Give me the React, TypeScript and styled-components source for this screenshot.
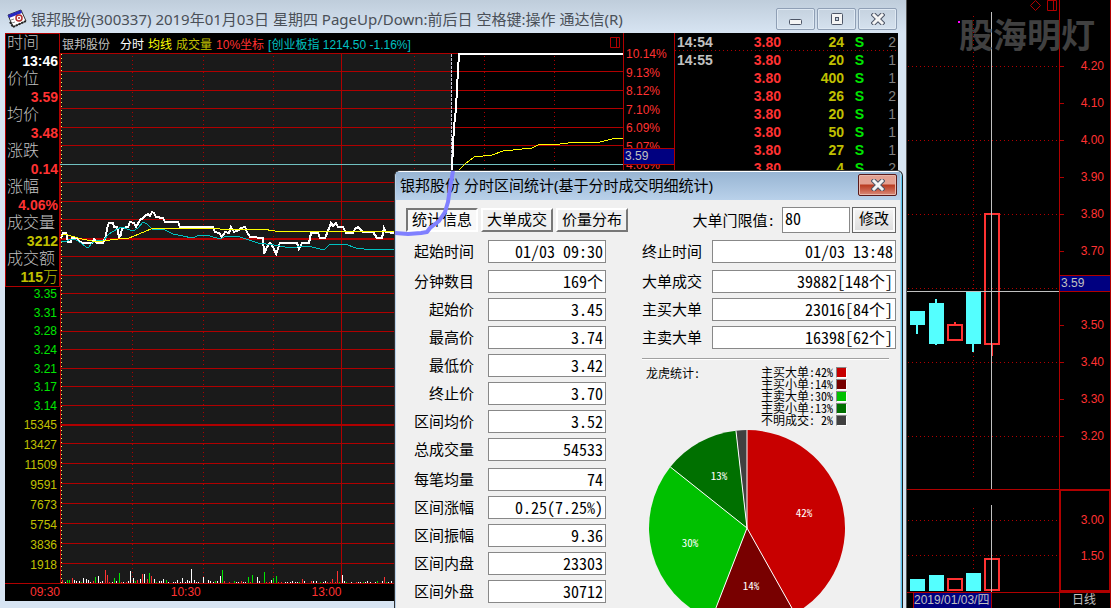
import React from 'react';
import styled, { createGlobalStyle } from 'styled-components';

const SANS = '"Liberation Sans", "Noto Sans CJK SC", sans-serif';
const TITLE = '"Noto Sans", "Noto Sans CJK SC", sans-serif';
const MONO = '"Noto Sans Mono CJK SC", "Liberation Mono", "Noto Sans CJK SC", monospace';

const RED = '#b00000';
const BRIGHT = '#ff3232';
const YELLOW = '#c0c000';
const SILVER = '#c0c0c0';
const AQUA = '#54ffff';

const GlobalStyle = createGlobalStyle`
  *, *::before, *::after { box-sizing: border-box; }
  body { margin: 0; background: #000; font-family: ${SANS}; }
  button, input { font: inherit; margin: 0; }
`;

const Desktop = styled.main`
  display: grid;
  grid-template-columns: minmax(0, 907fr) minmax(0, 204fr);
  min-height: 100vh;
  background: #000;
  overflow: hidden;
`;

/* ---------- intraday window ---------- */

const Window = styled.section`
  position: relative;
  display: flex;
  flex-direction: column;
  padding: 0 8px 7px 5px;
  border-right: 1px solid #555;
  background: #d7e4f2;
  overflow: hidden;
`;

const TitleBar = styled.header`
  display: flex;
  align-items: center;
  gap: 4px;
  height: 33px;
  margin: 0 -8px 0 -5px;
  padding: 5px 9px 0 7px;
  background: linear-gradient(#bfcddb, #d7e4f2);
`;

const WindowTitle = styled.h1`
  flex: 1;
  margin: 0;
  font: 400 15px/24px ${TITLE};
  color: #4a5058;
  white-space: nowrap;
`;

const Caption = styled.div`
  display: flex;
  gap: 2px;
`;

const CaptionButton = styled.button`
  display: flex;
  align-items: center;
  justify-content: center;
  width: 39px;
  height: 22px;
  padding: 0;
  border: 1px solid #8f9fb5;
  border-radius: 2px;
  background: linear-gradient(#c5d2df, #d5e1ee);
  box-shadow: inset 0 0 0 1px #dfe9f3;
`;

const Board = styled.div`
  display: grid;
  grid-template-columns: 55px minmax(0, 1fr) 52px 223px;
  grid-template-rows: auto 17px;
  background: #000;
`;

const Side = styled.aside`
  display: flex;
  flex-direction: column;
  border-bottom: 1px solid ${RED};
`;

const Quote = styled.dl`
  margin: 0;
  padding: 0 1px;
  border: 1px solid ${RED};
  line-height: 18px;
`;

const QuoteName = styled.dt`
  font-size: 16px;
  color: ${SILVER};
  font-weight: 300;
  white-space: nowrap;
`;

const QuoteValue = styled.dd<{ $color: string }>`
  height: 18px;
  margin: 0;
  font-size: 14px;
  font-weight: 700;
  text-align: right;
  white-space: nowrap;
  color: ${(p) => p.$color};
`;

const Unit = styled.span`
  font-size: 15px;
  font-weight: 300;
`;

const Scale = styled.div<{ $color: string; $height: number }>`
  display: flex;
  flex-direction: column;
  justify-content: space-between;
  align-items: flex-end;
  height: ${(p) => p.$height}px;
  padding-right: 3px;
  font: 12px/14px ${SANS};
  color: ${(p) => p.$color};
`;

const VolumeScale = styled(Scale)`
  margin-top: 5px;
`;

const ChartColumn = styled.div`
  display: flex;
  flex-direction: column;
  min-width: 0;
`;

const ChartHeader = styled.div`
  display: flex;
  align-items: center;
  gap: 4px;
  height: 20px;
  padding: 0 2px;
  font-size: 12px;
  white-space: nowrap;
`;

const Legend = styled.span<{ $color: string }>`
  color: ${(p) => p.$color};
`;

const StockName = styled(Legend)`
  margin-right: 6px;
`;

const HeaderIcon = styled.svg`
  margin-left: auto;
`;

const Plot = styled.svg<{ $height: number }>`
  display: block;
  width: 100%;
  height: ${(p) => p.$height}px;
`;

const PercentAxis = styled.div`
  position: relative;
  padding: 14px 0 0 2px;
  border: 1px solid ${RED};
  border-width: 0 1px;
`;

const PercentScale = styled(Scale)`
  align-items: flex-start;
  padding: 0;
`;

const CursorPrice = styled.output<{ $top: number }>`
  position: absolute;
  left: 0;
  right: 0;
  top: ${(p) => p.$top}px;
  height: 17px;
  padding-left: 1px;
  border: 1px solid ${RED};
  border-width: 1px 0;
  background: #000080;
  color: ${SILVER};
  font: 12px/15px ${SANS};
`;

const TimeAxis = styled.div`
  display: flex;
  color: ${BRIGHT};
  font: 12px/16px ${SANS};
`;

const TimeCell = styled.span`
  flex: 0 0 25%;
  text-align: right;
`;

const OpenTime = styled(TimeCell)`
  flex-basis: 100%;
`;

const Ticks = styled.table`
  align-self: start;
  width: 100%;
  border-collapse: collapse;
  font: 700 14px/18px ${SANS};
  td {
    padding: 0 2px;
    text-align: right;
  }
`;

const TickRow = styled.tr<{ $ruled: boolean }>`
  height: 18px;
  background: ${(p) =>
    p.$ruled ? `repeating-linear-gradient(90deg, ${RED} 0 1px, transparent 1px 4px) bottom / 100% 1px no-repeat` : 'none'};
`;

const TickCell = styled.td<{ $color: string; $width: number; $weight?: number }>`
  width: ${(p) => p.$width}px;
  color: ${(p) => p.$color};
  font-weight: ${(p) => p.$weight ?? 700};
`;

const TickTime = styled(TickCell)`
  && { text-align: left; }
`;

/* ---------- statistics dialog ---------- */

const Dialog = styled.section`
  position: absolute;
  top: 170px;
  left: 394px;
  width: 509px;
  height: 480px;
  border: 1px solid #333;
  border-right-color: #1c1c1c;
  border-radius: 6px 6px 0 0;
  background: #b9d1ea;
  padding: 0 2px 0 1px;
  box-shadow: inset 0 1px #fff, inset -1px 0 #58c8f0;
`;

const DialogTitle = styled.header`
  display: flex;
  align-items: center;
  justify-content: space-between;
  height: 28px;
  margin: 1px 0 0;
  padding: 0 3px 2px 4px;
  background: linear-gradient(#98b5d3, #b9d1ea);
  h2 {
    margin: 0;
    font: 400 15px/24px ${TITLE};
    color: #000;
    white-space: nowrap;
  }
`;

const CloseButton = styled.button`
  display: flex;
  align-items: center;
  justify-content: center;
  width: 39px;
  height: 22px;
  padding: 0;
  border: 1px solid #5a1a1a;
  border-radius: 2px;
  background: linear-gradient(#e3a091 0 45%, #b83a20 50%, #c9604a 75%, #d98c7c);
  box-shadow: inset 0 0 0 1px #e8b8ac;
`;

const DialogBody = styled.div`
  height: 450px;
  background: #f0f0f0;
  color: #000;
  font: 15px/20px ${MONO};
`;

const Toolbar = styled.div`
  display: flex;
  align-items: center;
  height: 40px;
  padding: 0 4px 0 10px;
`;

const Tabs = styled.div`
  display: flex;
  gap: 3px;
  flex: 1;
`;

const Tab = styled.button<{ $active?: boolean }>`
  width: 72px;
  height: 24px;
  padding: 0 0 2px;
  line-height: 18px;
  white-space: nowrap;
  color: #000;
  border: 2px solid;
  border-color: ${(p) => (p.$active ? '#777 #fff #fff #777' : '#fff #777 #777 #fff')};
  background: ${(p) => (p.$active ? '#f8f8f8' : '#f0f0f0')};
`;

const Threshold = styled.label`
  display: flex;
  align-items: center;
  gap: 7px;
  white-space: nowrap;
`;

const ThresholdInput = styled.input`
  width: 68px;
  height: 26px;
  padding: 0 2px 4px;
  border: 1px solid #888;
  background: #fff;
  font: 16px/20px ${MONO};
`;

const ApplyButton = styled.button`
  width: 44px;
  height: 26px;
  margin-left: 2px;
  padding: 0 0 4px;
  line-height: 20px;
  border: 1px solid #666;
  box-shadow: inset 0 0 0 2px #fafafa;
  background: linear-gradient(#f4f4f4, #dcdcdc);
  color: #000;
`;

const Columns = styled.div`
  display: grid;
  grid-template-columns: 200px 254px;
  column-gap: 36px;
  padding-left: 10px;
`;

const FieldGroups = styled.div`
  display: flex;
  flex-direction: column;
  gap: 7px;
`;

const FieldGroup = styled.div`
  display: flex;
  flex-direction: column;
  gap: 5px;
`;

const Field = styled.label<{ $gap: number }>`
  display: flex;
  justify-content: flex-end;
  gap: ${(p) => p.$gap}px;
  height: 23px;
  line-height: 21px;
  white-space: nowrap;
`;

const FieldValue = styled.input<{ $width: number }>`
  width: ${(p) => p.$width}px;
  height: 23px;
  padding: 0 2px 2px;
  border: 1px solid #888;
  background: #fff;
  color: #000;
  text-align: right;
  font: 16px/19px ${MONO};
`;

const Separator = styled.hr`
  width: 247px;
  height: 2px;
  margin: 9px 0 0;
  border: 0;
  border-top: 1px solid #a0a0a0;
  border-bottom: 1px solid #fff;
`;

const PieHead = styled.div`
  display: flex;
  justify-content: space-between;
  padding: 6px 49px 0 4px;
  font: 12px/14px ${MONO};
`;

const PieLegend = styled.ul`
  margin: 0;
  padding: 0;
  list-style: none;
  line-height: 12px;
`;

const PieLegendItem = styled.li`
  display: flex;
  align-items: center;
  justify-content: space-between;
  gap: 3px;
  height: 12px;
  white-space: pre;
`;

const Swatch = styled.i<{ $color: string }>`
  width: 11px;
  height: 11px;
  border: 1px solid;
  border-color: #888 #fff #fff #888;
  background: ${(p) => p.$color};
`;

const Pie = styled.svg`
  display: block;
  margin: 4px 0 0 7px;
  overflow: visible;
`;

const Stroke = styled.svg`
  position: absolute;
  top: -1px;
  left: -1px;
  pointer-events: none;
`;

/* ---------- daily panel ---------- */

const Daily = styled.section`
  position: relative;
  display: grid;
  grid-template-columns: minmax(0, 1fr) 52px;
  grid-template-rows: 489px 103px 16px;
  background: #000;
`;

const DailyAxis = styled.div`
  position: relative;
  padding: 48px 6px 0 0;
  border: 1px solid ${RED};
  border-width: 0 1px;
  background: repeating-linear-gradient(${RED} 0 1px, transparent 1px 37px) 0 66px / 4px 371px no-repeat;
`;

const DailyLabel = styled.div<{ $height: number }>`
  height: ${(p) => p.$height}px;
  font: 12px/${(p) => p.$height}px ${SANS};
  text-align: right;
  color: ${BRIGHT};
`;

const VolumeAxis = styled.div`
  padding: 11px 5px 0 0;
  border: 2px solid ${RED};
`;

const DateBar = styled.div`
  padding-left: 6px;
  border-top: 1px solid ${RED};
  color: ${SILVER};
  font: 12px/15px ${SANS};
  white-space: nowrap;
`;

const DateMark = styled.time`
  display: block;
  width: 79px;
  height: 15px;
  border: 1px solid ${RED};
  border-width: 0 1px;
  background: #000080;
`;

const Period = styled.div`
  padding-left: 12px;
  border: 1px solid ${RED};
  border-bottom: 0;
  color: ${SILVER};
  font-size: 12px;
  line-height: 15px;
`;

const Watermark = styled.div`
  position: absolute;
  top: 11px;
  right: 16px;
  font: 700 34px/46px "Noto Sans CJK SC", sans-serif;
  color: #404040;
  white-space: nowrap;
`;

/* ---------- data ---------- */

const quotes: [string, string, string, string?][] = [
  ['时间', '13:46', '#ffffff'],
  ['价位', '3.59', BRIGHT],
  ['均价', '3.48', BRIGHT],
  ['涨跌', '0.14', BRIGHT],
  ['涨幅', '4.06%', BRIGHT],
  ['成交量', '3212', YELLOW],
  ['成交额', '115', YELLOW, '万'],
];

const lowPrices = ['3.35', '3.31', '3.28', '3.24', '3.21', '3.17', '3.14'];
const volumes = ['15345', '13427', '11509', '9591', '7673', '5754', '3836', '1918'];
const percents = ['10.14%', '9.13%', '8.12%', '7.10%', '6.09%', '5.07%', '4.06%'];

const ticks: [string, string, string][] = [
  ['14:54', '24', '2'],
  ['14:55', '20', '1'],
  ['', '400', '1'],
  ['', '26', '2'],
  ['', '20', '1'],
  ['', '50', '1'],
  ['', '27', '1'],
  ['', '4', '2'],
];

const gridRows = [53, 71, 90, 108, 127, 145, 182, 201, 219, 256, 275, 293, 312, 331, 349, 368, 386, 405, 443, 463, 483, 503, 523, 543, 563, 583];
const gridCols = [132, 203, 273, 414, 484, 554];

const priceLine =
  '61,238 63,233 66,233 68,242 71,242 72,238 77,238 79,241 82,243 92,243 94,239 97,243 103,243 106,236 107,228 109,223 113,223 114,227 117,227 119,237 121,235 122,228 128,227 130,222 134,223 136,227 140,220 143,218 145,216 148,214 150,216 152,212 154,213 156,217 163,218 165,222 178,222 180,227 213,227 215,232 219,233 222,237 225,232 229,233 231,227 234,232 239,230 241,228 245,227 247,232 250,237 263,238 264,254 267,247 270,243 273,247 276,254 280,243 297,243 299,249 302,243 309,243 311,233 318,233 320,238 325,238 328,231 331,223 333,226 336,223 338,227 343,227 346,233 353,233 355,229 358,227 363,232 373,232 377,238 382,238 384,228 386,232 394,233';
const surge = '451,233 452,170 453,145 454,127 456,108 457,88 458,71 459,54 623,54';
const averageLine =
  '61,236 65,234 71,236 82,239 92,241 103,241 118,239 129,238 139,234 151,229 165,228 213,228 220,229 262,229 275,231 394,231';
const averageTail = '459,170 465,164 474,157 492,155 503,151 532,148 538,145 560,144 577,142 600,142 612,139 623,138';
const indexLine =
  '61,241 66,242 70,239 76,240 81,243 86,247 88,248 92,243 98,240 103,241 109,234 117,229 122,227 127,229 133,231 138,228 143,222 147,224 152,229 165,230 173,234 183,236 192,238 200,235 210,236 220,239 226,236 240,237 252,241 258,243 274,245 280,246 290,248 304,246 312,247 324,250 329,245 345,244 356,248 372,250 382,249 394,250';

/* x position, height and colour key: w white, r red, g green */
const bars: [number, number, string][] = [
  [62, 3, 'r'], [65, 1, 'w'], [67, 3, 'g'], [69, 3, 'g'], [72, 5, 'r'], [74, 3, 'w'], [76, 2, 'w'], [79, 2, 'w'], [81, 1, 'g'],
  [83, 5, 'w'], [86, 4, 'w'], [88, 3, 'w'], [90, 1, 'w'], [93, 2, 'r'], [95, 6, 'g'], [98, 7, 'w'], [100, 1, 'w'], [102, 2, 'w'],
  [105, 13, 'r'], [107, 8, 'r'], [109, 1, 'r'], [112, 1, 'w'], [114, 5, 'g'], [116, 2, 'w'], [119, 10, 'g'], [121, 1, 'r'], [123, 1, 'w'],
  [126, 1, 'r'], [128, 2, 'w'], [130, 12, 'w'], [133, 5, 'w'], [135, 2, 'g'], [137, 3, 'r'], [140, 4, 'w'], [142, 9, 'r'], [144, 9, 'w'],
  [147, 4, 'r'], [149, 10, 'g'], [151, 7, 'r'], [154, 4, 'w'], [156, 1, 'g'], [159, 2, 'w'], [161, 2, 'w'], [163, 4, 'w'], [166, 3, 'g'],
  [168, 1, 'w'], [173, 1, 'w'], [175, 1, 'w'], [177, 3, 'w'], [180, 1, 'w'], [182, 5, 'w'], [185, 1, 'w'], [187, 3, 'w'], [189, 2, 'w'],
  [191, 14, 'w'], [194, 3, 'w'], [196, 1, 'w'], [198, 1, 'w'], [203, 6, 'w'], [208, 3, 'w'], [210, 2, 'w'], [213, 1, 'w'], [215, 2, 'g'],
  [217, 2, 'w'], [220, 7, 'w'], [222, 13, 'g'], [224, 2, 'r'], [229, 1, 'r'], [234, 2, 'g'], [236, 1, 'w'], [238, 1, 'w'], [241, 2, 'r'],
  [243, 1, 'w'], [245, 1, 'w'], [248, 6, 'g'], [250, 1, 'r'], [252, 8, 'g'], [257, 6, 'w'], [259, 2, 'w'], [264, 11, 'g'], [266, 1, 'r'],
  [269, 1, 'r'], [271, 3, 'w'], [273, 5, 'g'], [276, 7, 'g'], [278, 1, 'r'], [281, 1, 'r'], [285, 1, 'w'], [287, 1, 'w'], [290, 1, 'w'],
  [292, 2, 'w'], [295, 1, 'w'], [297, 1, 'w'], [299, 1, 'g'], [302, 4, 'r'], [304, 2, 'w'], [311, 2, 'r'], [313, 2, 'w'], [316, 2, 'w'],
  [320, 1, 'g'], [323, 1, 'w'], [325, 2, 'w'], [327, 1, 'r'], [330, 1, 'r'], [332, 4, 'r'], [335, 1, 'r'], [337, 12, 'r'], [339, 1, 'g'],
  [342, 8, 'w'], [344, 2, 'w'], [346, 1, 'g'], [351, 1, 'w'], [356, 1, 'r'], [358, 1, 'w'], [360, 1, 'w'], [363, 1, 'g'], [365, 1, 'w'],
  [367, 2, 'w'], [370, 1, 'w'], [375, 1, 'w'], [377, 2, 'g'], [382, 2, 'w'], [384, 6, 'r'], [386, 1, 'g'], [388, 1, 'w'], [391, 2, 'w'],
];
const barColors: Record<string, string> = { w: '#ffffff', r: BRIGHT, g: '#00e600' };

const leftFields: [string, string][][] = [
  [['起始时间', '01/03 09:30']],
  [
    ['分钟数目', '169个'],
    ['起始价', '3.45'],
    ['最高价', '3.74'],
    ['最低价', '3.42'],
    ['终止价', '3.70'],
    ['区间均价', '3.52'],
    ['总成交量', '54533'],
  ],
  [
    ['每笔均量', '74'],
    ['区间涨幅', '0.25(7.25%)'],
    ['区间振幅', '9.36'],
    ['区间内盘', '23303'],
    ['区间外盘', '30712'],
  ],
];

const rightFields: [string, string][][] = [
  [['终止时间', '01/03 13:48']],
  [
    ['大单成交', '39882[148个]'],
    ['主买大单', '23016[84个]'],
    ['主卖大单', '16398[62个]'],
  ],
];

const slices = [
  { name: '主买大单', share: '42%', color: '#c80000', from: 0, to: 0.4186, x: 155, y: 87 },
  { name: '主买小单', share: '14%', color: '#780000', from: 0.4186, to: 0.559, x: 102, y: 160 },
  { name: '主卖大单', share: '30%', color: '#00c000', from: 0.559, to: 0.857, x: 41, y: 117 },
  { name: '主卖小单', share: '13%', color: '#007000', from: 0.857, to: 0.982, x: 70, y: 50 },
  { name: '不明成交', share: ' 2%', color: '#404040', from: 0.982, to: 1, x: 0, y: 0 },
];

const wedge = (from: number, to: number) => {
  const at = (t: number) => `${98 + 98 * Math.sin(t * 2 * Math.PI)} ${98 - 98 * Math.cos(t * 2 * Math.PI)}`;
  return `M98 98L${at(from)}A98 98 0 0 1 ${at(to)}Z`;
};

const dailyPrices = ['4.20', '4.10', '4.00', '3.90', '3.80', '3.70', '3.60', '3.50', '3.40', '3.30', '3.20'];

/* ---------- parts ---------- */

const Cross = () => (
  <svg width="14" height="12" viewBox="0 0 14 12" aria-hidden="true">
    <path d="M3 2l8 8M11 2l-8 8" stroke="#4d5566" strokeWidth="5" strokeLinecap="square" />
    <path d="M3 2l8 8M11 2l-8 8" stroke="#f4f4f4" strokeWidth="3" strokeLinecap="square" />
  </svg>
);

const IntradayPlot = () => (
  <Plot $height={531} viewBox="60 53 563 531" preserveAspectRatio="none" shapeRendering="crispEdges" role="img" aria-label="分时图">
    <rect x="60" y="53" width="391" height="531" fill="#1a1a1a" />
    <g fill={RED}>
      {gridRows.map((y) => (
        <rect key={y} x="60" y={y} width="563" height="1" />
      ))}
      <rect x="60" y="238" width="563" height="2" />
      <rect x="60" y="424" width="563" height="2" />
      <rect x="60" y="53" width="1" height="531" />
      <rect x="341" y="53" width="1" height="531" />
    </g>
    {gridCols.map((x) => (
      <path key={x} d={`M${x + 0.5} 56V583`} stroke={RED} strokeDasharray="1 3" />
    ))}
    <path d="M61.5 54V583" stroke="#ffff60" strokeDasharray="1 3" />
    <rect x="60" y="164" width="563" height="1" fill="#70c0c0" />
    <path d="M451.5 54V583" stroke="#c8c8d8" strokeDasharray="3 1" />
    {bars.map(([x, h, c]) => (
      <rect key={x} x={x} y={583 - h} width="1" height={h} fill={barColors[c]} />
    ))}
    <g fill="none">
      <polyline points={priceLine} stroke="#fff" strokeWidth="2" />
      <polyline points={indexLine} stroke="#00c0c0" />
      <polyline points={averageLine} stroke="#ffff00" />
      <polyline points={averageTail} stroke="#ffff00" />
      <polyline points={surge} stroke="#fff" strokeWidth="2" />
    </g>
  </Plot>
);

const Fields = ({ groups, gap, width }: { groups: [string, string][][]; gap: number; width: number }) => (
  <FieldGroups>
    {groups.map((group) => (
      <FieldGroup key={group[0][0]}>
        {group.map(([name, value]) => (
          <Field key={name} $gap={gap}>
            {name}
            <FieldValue $width={width} readOnly value={value} />
          </Field>
        ))}
      </FieldGroup>
    ))}
  </FieldGroups>
);

const StatsDialog = () => (
  <Dialog role="dialog" aria-label="分时区间统计">
    <DialogTitle>
      <h2>银邦股份 分时区间统计(基于分时成交明细统计)</h2>
      <CloseButton aria-label="关闭">
        <Cross />
      </CloseButton>
    </DialogTitle>
    <DialogBody>
      <Toolbar>
        <Tabs>
          <Tab $active>统计信息</Tab>
          <Tab>大单成交</Tab>
          <Tab>价量分布</Tab>
        </Tabs>
        <Threshold>
          大单门限值:
          <ThresholdInput defaultValue="80" />
        </Threshold>
        <ApplyButton>修改</ApplyButton>
      </Toolbar>
      <Columns>
        <Fields groups={leftFields} gap={14} width={118} />
        <div>
          <Fields groups={rightFields} gap={10} width={184} />
          <Separator />
          <PieHead>
            <span>龙虎统计:</span>
            <PieLegend>
              {slices.map((s) => (
                <PieLegendItem key={s.name}>
                  {`${s.name}:${s.share}`}
                  <Swatch $color={s.color} />
                </PieLegendItem>
              ))}
            </PieLegend>
          </PieHead>
          <Pie width="196" height="196" viewBox="0 0 196 196" role="img" aria-label="龙虎统计">
            {slices.map((s) => (
              <path key={s.name} d={wedge(s.from, s.to)} fill={s.color} />
            ))}
            {slices.map((s) => (
              <path
                key={s.name}
                d={`M98 98L${98 + 98 * Math.sin(s.from * 2 * Math.PI)} ${98 - 98 * Math.cos(s.from * 2 * Math.PI)}`}
                stroke="#fff"
              />
            ))}
            <g fill="#fff" fontSize="11" textAnchor="middle" fontFamily={MONO}>
              {slices.slice(0, 4).map((s) => (
                <text key={s.name} x={s.x} y={s.y}>
                  {s.share}
                </text>
              ))}
            </g>
          </Pie>
        </div>
      </Columns>
    </DialogBody>
    <Stroke width="70" height="80" viewBox="0 0 70 80" aria-hidden="true">
      <path d="M1 63L14 64 27 63 33 62 36 58 45 51 51 42 54 32 56 18 59 1" fill="none" stroke="#8080ff" strokeWidth="4" strokeLinejoin="round" />
    </Stroke>
  </Dialog>
);

const DailyPanel = () => (
  <Daily>
    <Plot $height={489} viewBox="907 0 152 489" preserveAspectRatio="none" shapeRendering="crispEdges" role="img" aria-label="日线图">
      {[66, 140, 214, 288, 362, 436].map((y) => (
        <path key={y} d={`M908 ${y}.5H1059`} stroke={RED} strokeDasharray="1 3" />
      ))}
      <path d="M973.5 16V478" stroke={RED} strokeDasharray="1 3" />
      <rect x="958" y="21" width="2" height="2" fill="#ff00ff" />
      <path d="M1035.5 .5l5 5-5 5-5-5zM1047.5 .5h9v10h-9zM1053.5 .5v10" fill="none" stroke={RED} shapeRendering="auto" />
      <g fill={AQUA}>
        <path d="M910 311h15v14h-15zM916 325h2v9h-2z" />
        <path d="M929 303h15v41h-15zM935 299h2v46h-2z" />
        <path d="M966 292h15v52h-15zM972 344h2v8h-2z" />
      </g>
      <g fill="none" stroke={BRIGHT} strokeWidth="2">
        <path d="M948 325h14v15h-14zM955 322v3" />
        <path d="M985 214h14v130h-14zM992 344v12" />
      </g>
      <rect x="991" y="12" width="1" height="477" fill={SILVER} />
      <rect x="907" y="291" width="152" height="1" fill={SILVER} />
    </Plot>
    <DailyAxis>
      {dailyPrices.map((p) => (
        <DailyLabel key={p} $height={37}>
          {p}
        </DailyLabel>
      ))}
      <CursorPrice $top={275}>3.59</CursorPrice>
    </DailyAxis>
    <Plot $height={103} viewBox="907 489 152 103" preserveAspectRatio="none" shapeRendering="crispEdges" role="img" aria-label="成交量">
      <rect x="907" y="489" width="152" height="1" fill={RED} />
      <path d="M908 520.5H1059M908 555.5H1059M973.5 508V572" stroke={RED} strokeDasharray="1 3" />
      <path d="M910 579h15v12h-15zM929 575h15v16h-15zM966 573h15v18h-15z" fill={AQUA} />
      <path d="M948 579h14v11h-14zM985 559h14v31h-14z" fill="none" stroke={BRIGHT} strokeWidth="2" />
      <rect x="991" y="505" width="1" height="87" fill={SILVER} />
    </Plot>
    <VolumeAxis>
      <DailyLabel $height={36}>3.00</DailyLabel>
      <DailyLabel $height={36}>1.50</DailyLabel>
    </VolumeAxis>
    <DateBar>
      <DateMark dateTime="2019-01-03">2019/01/03/四</DateMark>
    </DateBar>
    <Period>日线</Period>
    <Watermark>股海明灯</Watermark>
  </Daily>
);

export default function App() {
  return (
    <Desktop>
      <GlobalStyle />
      <Window>
        <TitleBar>
          <svg width="20" height="20" viewBox="0 0 20 20" aria-hidden="true">
            <path d="M1 6L14 1 19 12 6 18z" fill="#fff" stroke="#333" />
            <path d="M1 6L14 1 15 4 2 9z" fill="#2828c0" />
            <path d="M3 13l3 5 13-6" fill="none" stroke="#222" strokeWidth="2" strokeDasharray="2 1" />
            <circle cx="12" cy="9" r="3" fill="#fff" stroke="#b03030" strokeWidth="1.5" />
            <circle cx="12" cy="9" r="1" fill="#b03030" />
            <path d="M4 11l3-1M5 14l3-1" stroke="#888" />
          </svg>
          <WindowTitle>银邦股份(300337) 2019年01月03日 星期四 PageUp/Down:前后日 空格键:操作 通达信(R)</WindowTitle>
          <Caption>
            <CaptionButton aria-label="最小化">
              <svg width="14" height="12" viewBox="0 0 14 12">
                <rect x=".5" y="6.5" width="12" height="5" rx="1" fill="#f4f4f4" stroke="#4d5566" />
              </svg>
            </CaptionButton>
            <CaptionButton aria-label="最大化">
              <svg width="14" height="12" viewBox="0 0 14 12">
                <rect x="1.5" y=".5" width="11" height="11" rx="1" fill="#f4f4f4" stroke="#4d5566" />
                <rect x="5.5" y="4.5" width="3" height="3" fill="#c5d2df" stroke="#4d5566" />
              </svg>
            </CaptionButton>
            <CaptionButton aria-label="关闭">
              <Cross />
            </CaptionButton>
          </Caption>
        </TitleBar>
        <Board>
          <Side>
            <Quote>
              {quotes.map(([name, value, color, unit]) => (
                <React.Fragment key={name}>
                  <QuoteName>{name}</QuoteName>
                  <QuoteValue $color={color}>
                    {value}
                    {unit && <Unit>{unit}</Unit>}
                  </QuoteValue>
                </React.Fragment>
              ))}
            </Quote>
            <Scale $color="#00e600" $height={126}>
              {lowPrices.map((p) => (
                <span key={p}>{p}</span>
              ))}
            </Scale>
            <VolumeScale $color={YELLOW} $height={154}>
              {volumes.map((v) => (
                <span key={v}>{v}</span>
              ))}
            </VolumeScale>
          </Side>
          <ChartColumn>
            <ChartHeader>
              <StockName $color={SILVER}>银邦股份</StockName>
              <Legend $color="#ffffff">分时</Legend>
              <Legend $color="#ffff00">均线</Legend>
              <Legend $color={YELLOW}>成交量</Legend>
              <Legend $color={BRIGHT}>10%坐标</Legend>
              <Legend $color="#00c0c0">[创业板指 1214.50 -1.16%]</Legend>
              <HeaderIcon width="11" height="12" viewBox="0 0 11 12" aria-hidden="true">
                <path d="M.5 .5h9v10h-9zM6.5 .5v10" fill="none" stroke={RED} />
              </HeaderIcon>
            </ChartHeader>
            <IntradayPlot />
          </ChartColumn>
          <PercentAxis>
            <PercentScale $color={BRIGHT} $height={125}>
              {percents.map((p) => (
                <span key={p}>{p}</span>
              ))}
            </PercentScale>
            <CursorPrice $top={115}>3.59</CursorPrice>
          </PercentAxis>
          <Ticks>
            <tbody>
              {ticks.map(([time, volume, count], i) => (
                <TickRow key={i} $ruled={i === 0}>
                  <TickTime $color={SILVER} $width={54}>{time}</TickTime>
                  <TickCell $color={BRIGHT} $width={54}>3.80</TickCell>
                  <TickCell $color={YELLOW} $width={63}>{volume}</TickCell>
                  <TickCell $color="#00e600" $width={20}>S</TickCell>
                  <TickCell $color="#808080" $width={32} $weight={400}>{count}</TickCell>
                </TickRow>
              ))}
            </tbody>
          </Ticks>
          <TimeAxis>
            <OpenTime>09:30</OpenTime>
          </TimeAxis>
          <TimeAxis>
            <TimeCell>10:30</TimeCell>
            <TimeCell>13:00</TimeCell>
          </TimeAxis>
        </Board>
        <StatsDialog />
      </Window>
      <DailyPanel />
    </Desktop>
  );
}
